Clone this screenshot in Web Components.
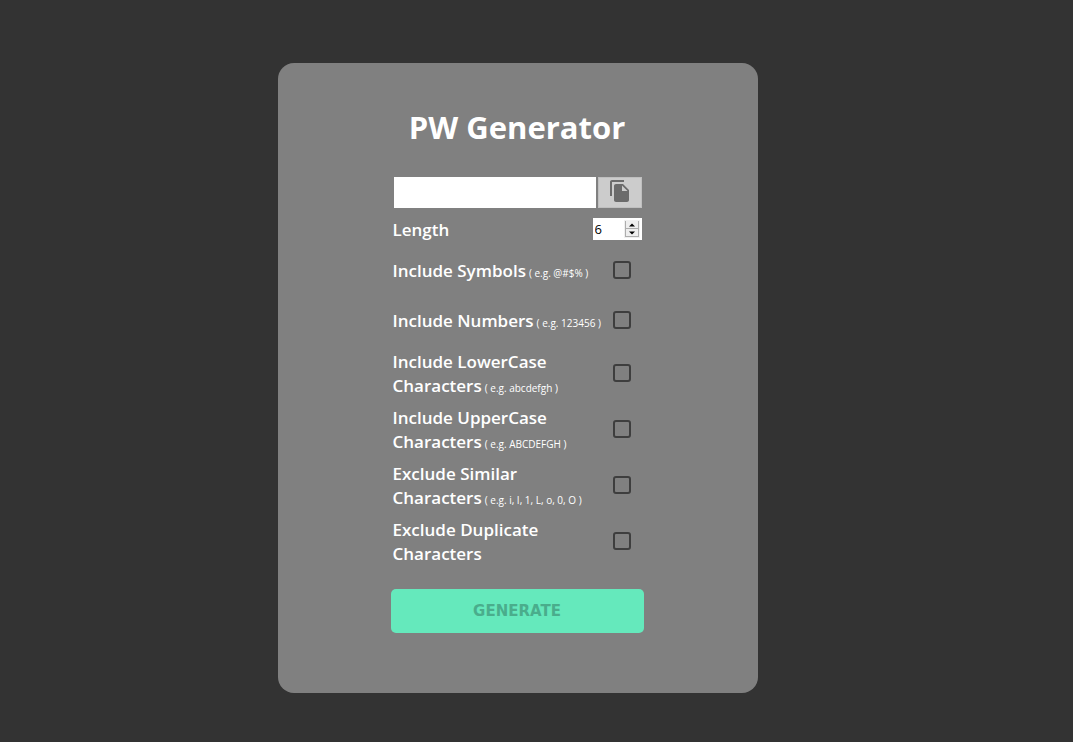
<!DOCTYPE html>
<html lang="en">
<head>
<meta charset="utf-8">
<title>PW Generator</title>
<style>
body { margin: 0; background: #333; font-family: "Open Sans", "Noto Sans", sans-serif; color: #fff; }
</style>
</head>
<body>
<pw-generator></pw-generator>

<template id="option-template">
<style>
:host { display: block; }
label { display: flex; align-items: center; justify-content: space-between; min-height: 50px; padding: 3px 13px 3px 2px; box-sizing: border-box; }
.text { flex: 0 0 212px; padding-top: 2px; font-size: 17px; font-weight: 600; line-height: 24px; }
small { margin-left: 3px; font-size: 10px; font-weight: 400; line-height: 1; white-space: nowrap; }
input { appearance: none; width: 18px; height: 18px; margin: 0; border: 2px solid #3e3e3e; border-radius: 3px; flex: none; }
input:checked { background: #65e9bc; }
</style>
<label><span class="text"><slot></slot><small></small></span><input type="checkbox"></label>
</template>

<template id="stepper-template">
<style>
:host { display: flex; align-items: center; justify-content: space-between; padding: 0 2px; margin: 10px 0 5px; }
label { padding-top: 2px; font-size: 17px; font-weight: 600; line-height: 20px; }
.field { display: flex; align-items: center; width: 49px; height: 22px; padding: 0 2px; box-sizing: border-box; background: #fff; }
input { appearance: textfield; flex: 1; min-width: 0; padding: 0; border: 0; outline: 0; background: none; color: #000; font: 13px "Open Sans", sans-serif; }
input::-webkit-inner-spin-button { appearance: none; margin: 0; }
.arrows { display: flex; flex-direction: column; width: 16px; background: #f0f0f0; padding: 1px; box-sizing: border-box; }
button { display: flex; align-items: center; justify-content: center; height: 8px; padding: 0; border: 1px solid #adadad; border-top: 0; background: #eee; }
svg { display: block; }
</style>
<label for="length">Length</label>
<div class="field">
<input id="length" type="number" value="6" min="1">
<div class="arrows">
<button type="button" aria-label="Increase"><svg width="6" height="4"><path d="M0 3.5 3 .5 6 3.5z"/></svg></button>
<button type="button" aria-label="Decrease"><svg width="6" height="4"><path d="M0 .5h6L3 3.5z"/></svg></button>
</div>
</div>
</template>

<template id="output-template">
<style>
:host { display: flex; gap: 2px; padding: 0 2px 0 3px; }
input { flex: 1; min-width: 0; height: 31px; padding: 0 6px; box-sizing: border-box; border: 0; border-radius: 0; background: #fff; font: 14px "Open Sans", sans-serif; }
button { display: flex; justify-content: center; width: 44px; height: 31px; padding: 1px 0 0; box-sizing: border-box; border: 1px solid #bfbfbf; background: #ccc; }
svg { display: block; fill: #6b6b6b; }
</style>
<input type="text" aria-label="Password" readonly>
<button type="button" aria-label="Copy password"><svg width="24" height="24" viewBox="0 0 24 24"><path d="M16 1H4c-1.100 0-2 .9-2 2v14h2V3h12V1zm-1 4 6 6v10c0 1.100-.9 2-2 2H7.990C6.890 23 6 22.100 6 21l.01-14c0-1.100.89-2 1.990-2h7zm-1 7h5.500L14 6.500V12z"/></svg></button>
</template>

<template id="generator-template">
<style>
:host { display: flex; justify-content: center; align-items: center; min-height: 100vh; padding: 14px 37px 0 0; box-sizing: border-box; }
main { width: 100%; max-width: 480px; padding: 40px 18px 60px 16px; box-sizing: border-box; border-radius: 16px; background: #808080; }
form { width: 100%; max-width: 253px; margin: 0 auto; }
h1 { margin: 0 0 26px; font-size: 31px; line-height: 48px; font-weight: 700; text-align: center; white-space: nowrap; }
.generate { display: block; width: 100%; height: 44px; margin-top: 20px; padding: 0; border: 0; border-radius: 5px; background: #65e9bc; color: #4aad8c; font: bold 15px "DejaVu Sans", Verdana, sans-serif; }
</style>
<main>
<form>
<h1>PW Generator</h1>
<pw-output></pw-output>
<pw-length></pw-length>
<pw-option hint="( e.g. @#$% )">Include Symbols</pw-option>
<pw-option hint="( e.g. 123456 )">Include Numbers</pw-option>
<pw-option hint="( e.g. abcdefgh )">Include LowerCase Characters</pw-option>
<pw-option hint="( e.g. ABCDEFGH )">Include UpperCase Characters</pw-option>
<pw-option hint="( e.g. i, I, 1, L, o, 0, O )">Exclude Similar Characters</pw-option>
<pw-option>Exclude Duplicate Characters</pw-option>
<button class="generate" type="button">GENERATE</button>
</form>
</main>
</template>

<script>
class TemplateElement extends HTMLElement {
  constructor() {
    super();
    const template = document.getElementById(this.constructor.template);
    this.attachShadow({ mode: "open" }).append(template.content.cloneNode(true));
  }
}

class PwOption extends TemplateElement {
  static template = "option-template";
  connectedCallback() {
    const hint = this.shadowRoot.querySelector("small");
    if (this.hasAttribute("hint")) hint.textContent = this.getAttribute("hint");
    else hint.hidden = true;
    this.shadowRoot.querySelector("input").setAttribute("aria-label", this.textContent);
  }
}

class PwLength extends TemplateElement {
  static template = "stepper-template";
  connectedCallback() {
    const input = this.shadowRoot.querySelector("input");
    const [up, down] = this.shadowRoot.querySelectorAll("button");
    up.onclick = () => input.stepUp();
    down.onclick = () => input.stepDown();
  }
}

class PwOutput extends TemplateElement {
  static template = "output-template";
}

class PwGenerator extends TemplateElement {
  static template = "generator-template";
}

customElements.define("pw-option", PwOption);
customElements.define("pw-length", PwLength);
customElements.define("pw-output", PwOutput);
customElements.define("pw-generator", PwGenerator);
</script>
</body>
</html>
